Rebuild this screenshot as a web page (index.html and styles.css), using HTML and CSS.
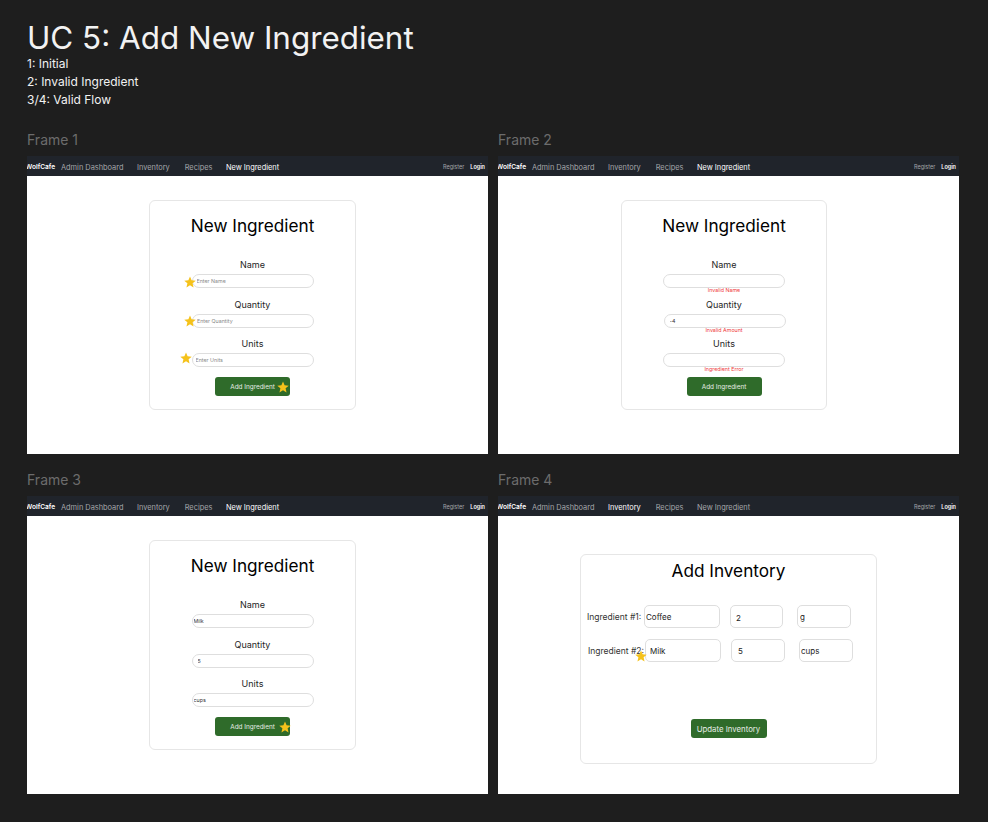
FILE: index.html
```html
<!DOCTYPE html>
<html lang="en">
<head>
    <meta charset="UTF-8">
    <meta name="viewport" content="width=device-width, initial-scale=1.0">
    <title>UC 5: Add New Ingredient</title>
    <link rel="stylesheet" href="styles.css">
</head>
<body>
    <svg class="defs" width="0" height="0">
        <symbol id="star" viewBox="0 0 24 24">
            <polygon points="12,1 15.2,8.6 23.5,9.3 17.2,14.7 19.1,22.8 12,18.5 4.9,22.8 6.8,14.7 .5,9.3 8.8,8.6"/>
        </symbol>
    </svg>

    <header>
        <h1>UC 5: Add New Ingredient</h1>
        <p>1: Initial</p>
        <p>2: Invalid Ingredient</p>
        <p>3/4: Valid Flow</p>
    </header>

    <main>
        <section>
            <h2>Frame 1</h2>
            <div class="frame">
                <nav>
                    <b>WolfCafe</b>
                    <a>Admin Dashboard</a><a>Inventory</a><a>Recipes</a><a class="on">New Ingredient</a>
                    <span class="auth">Register</span><span class="auth on">Login</span>
                </nav>
                <div class="card">
                    <h3>New Ingredient</h3>
                    <div class="field"><label>Name</label><input placeholder="Enter Name"><div class="err"></div></div>
                    <div class="field"><label>Quantity</label><input class="shift pl4" placeholder="Enter Quantity"><div class="err"></div></div>
                    <div class="field"><label>Units</label><input class="pl3" placeholder="Enter Units"><div class="err"></div></div>
                    <button>Add Ingredient</button>
                </div>
                <svg class="star s1"><use href="#star"/></svg>
                <svg class="star s2"><use href="#star"/></svg>
                <svg class="star s3"><use href="#star"/></svg>
                <svg class="star s4"><use href="#star"/></svg>
            </div>
        </section>

        <section>
            <h2>Frame 2</h2>
            <div class="frame">
                <nav>
                    <b>WolfCafe</b>
                    <a>Admin Dashboard</a><a>Inventory</a><a>Recipes</a><a class="on">New Ingredient</a>
                    <span class="auth">Register</span><span class="auth on">Login</span>
                </nav>
                <div class="card right">
                    <h3>New Ingredient</h3>
                    <div class="field"><label>Name</label><input><div class="err">Invalid Name</div></div>
                    <div class="field"><label>Quantity</label><input class="shift pl5" value="-4"><div class="err">Invalid Amount</div></div>
                    <div class="field"><label>Units</label><input><div class="err">Ingredient Error</div></div>
                    <button>Add Ingredient</button>
                </div>
            </div>
        </section>

        <section>
            <h2>Frame 3</h2>
            <div class="frame">
                <nav>
                    <b>WolfCafe</b>
                    <a>Admin Dashboard</a><a>Inventory</a><a>Recipes</a><a class="on">New Ingredient</a>
                    <span class="auth">Register</span><span class="auth on">Login</span>
                </nav>
                <div class="card">
                    <h3>New Ingredient</h3>
                    <div class="field"><label>Name</label><input class="pl1" value="Milk"><div class="err"></div></div>
                    <div class="field"><label>Quantity</label><input class="pl5" value="5"><div class="err"></div></div>
                    <div class="field"><label>Units</label><input class="pl1" value="cups"><div class="err"></div></div>
                    <button>Add Ingredient</button>
                </div>
                <svg class="star s5"><use href="#star"/></svg>
            </div>
        </section>

        <section>
            <h2>Frame 4</h2>
            <div class="frame">
                <nav>
                    <b>WolfCafe</b>
                    <a>Admin Dashboard</a><a class="on">Inventory</a><a>Recipes</a><a>New Ingredient</a>
                    <span class="auth">Register</span><span class="auth on">Login</span>
                </nav>
                <div class="card wide">
                    <h3>Add Inventory</h3>
                    <div class="row">
                        <label>Ingredient #1:</label>
                        <input class="name pl1" value="Coffee">
                        <input class="qty pl5 low" value="2">
                        <input class="unit pl2" value="g">
                    </div>
                    <div class="row second">
                        <label>Ingredient #2:</label>
                        <input class="name pl4" value="Milk">
                        <input class="qty pl6" value="5">
                        <input class="unit pl1" value="cups">
                    </div>
                    <button class="update">Update Inventory</button>
                </div>
                <svg class="star s6"><use href="#star"/></svg>
            </div>
        </section>
    </main>
</body>
</html>
```

FILE: styles.css
```css
*{
    margin: 0;
    box-sizing: border-box;
    font-family: Inter, "Liberation Sans", sans-serif;
}
body{
    background-color: #1e1e1e;
    width: 988px;
    height: 822px;
    padding: 21px 29px 0 27px;
    overflow: hidden;
    color: #f2f2f2;
}
.defs{
    position: absolute;
}
h1{
    font-size: 31.4px;
    font-weight: 400;
    line-height: 34px;
    white-space: nowrap;
}
header p{
    font-size: 12px;
    font-weight: 400;
    line-height: 18px;
}
main{
    display: grid;
    grid-template-columns: 461px 461px;
    column-gap: 10px;
    row-gap: 17px;
    margin-top: 22px;
}
h2{
    font-size: 14px;
    font-weight: 400;
    line-height: 17px;
    color: #6c6c6c;
    margin-bottom: 8px;
}
.frame{
    position: relative;
    height: 298px;
    background-color: white;
    color: #1e1e1e;
    overflow: hidden;
}
nav{
    display: flex;
    align-items: center;
    height: 20px;
    padding-top: 2px;
    background-color: #20242b;
    color: #a5a7aa;
    font-size: 7.4px;
    white-space: nowrap;
}
nav b{
    color: white;
    font-size: 6.6px;
    font-weight: 600;
    margin-left: -1.5px;
    width: 35.5px;
}
nav a{
    margin-right: 13.5px;
}
nav a:nth-of-type(2){
    margin-right: 15px;
}
nav .on{
    color: white;
}
.auth{
    font-size: 5.5px;
    margin-left: auto;
}
.auth.on{
    margin-left: 6px;
    margin-right: 3px;
    font-weight: 600;
}
.card{
    display: flex;
    flex-direction: column;
    align-items: center;
    width: 207px;
    height: 210px;
    margin: 24px 0 0 122px;
    padding-top: 13px;
    border: 1px solid #e6e6e6;
    border-radius: 6px;
}
.card.right{
    width: 206px;
    margin-left: 123px;
}
h3{
    font-size: 17.2px;
    font-weight: 400;
    line-height: 23px;
    color: black;
    margin-bottom: 22px;
}
.field{
    display: flex;
    flex-direction: column;
    align-items: center;
}
.field label{
    font-size: 9px;
    line-height: 12px;
    margin-bottom: 3px;
}
input{
    display: block;
    width: 122px;
    height: 14px;
    padding: 0 0 0 4px;
    border: 1px solid #dedede;
    border-radius: 7px;
    background: white;
    outline: none;
    font-size: 5.3px;
    color: #333;
}
input::placeholder{
    color: #8a8a8a;
}
.shift{
    position: relative;
    left: .5px;
}
.pl1{ padding-left: 1px; }
.pl2{ padding-left: 2px; }
.pl3{ padding-left: 3px; }
.pl4{ padding-left: 4px; }
.pl5{ padding-left: 5px; }
.pl6{ padding-left: 6px; }
.err{
    height: 10.5px;
    font-size: 5.3px;
    line-height: 4px;
    color: #ef3a3a;
}
button{
    width: 75px;
    height: 19px;
    margin-top: -.5px;
    padding: 1px 0 0;
    border: 0;
    border-radius: 3px;
    background-color: #2f6b2a;
    color: #e6ece5;
    font-size: 6.4px;
    white-space: nowrap;
}
.card.wide{
    width: 297px;
    margin: 38px 0 0 82px;
    padding-top: 4px;
}
.wide h3{
    margin-bottom: 23px;
}
.row{
    display: flex;
    align-items: center;
    width: 100%;
    padding-left: 6px;
    margin-bottom: 11px;
}
.row.second{
    padding-left: 7px;
}
.row label{
    width: 57px;
    font-size: 8.5px;
    color: #333;
}
.row input{
    height: 23px;
    border-radius: 5px;
    font-size: 8px;
    color: #222;
}
.row .name{
    width: 76px;
    margin-right: 10px;
}
.row .qty{
    width: 53px;
    margin-right: 14px;
}
.row.second .qty{
    width: 54px;
}
.row .unit{
    width: 54px;
}
.row .low{
    padding-top: 3px;
}
.update{
    width: 76px;
    margin-top: 46px;
    font-size: 7.8px;
}
.star{
    position: absolute;
    width: 12px;
    height: 12px;
    fill: #f5c21b;
}
.s1{ left: 157px; top: 120px; }
.s2{ left: 157px; top: 159px; }
.s3{ left: 153px; top: 196px; }
.s4{ left: 250px; top: 225px; }
.s5{ left: 252px; top: 225px; }
.s6{ left: 137px; top: 154px; }
```
